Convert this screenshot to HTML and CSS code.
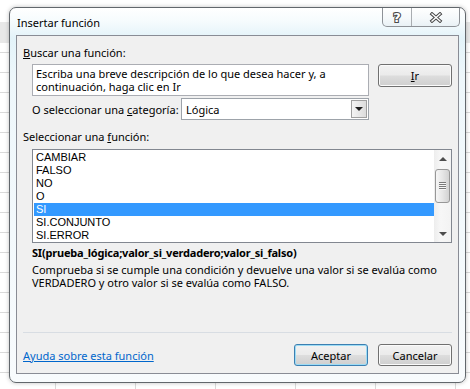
FILE: index.html
```html
<!DOCTYPE html>
<html lang="es">
<head>
  <meta charset="UTF-8">
  <title>Insertar función</title>
  <link rel="stylesheet" href="styles.css">
</head>
<body>
  <div class="dialog">
    <div class="titlebar">
      <span class="title">Insertar función</span>
      <div class="caption-btns">
        <span class="cap-btn help">
          <svg width="12" height="14" viewBox="0 0 12 14"><text x="6" y="12" text-anchor="middle" class="help-glyph">?</text></svg>
        </span>
        <span class="cap-btn close">
          <svg width="14" height="11" viewBox="0 0 14 11">
            <path d="M3 2 L11 9 M11 2 L3 9" stroke="#4a4a4a" stroke-width="3.4" stroke-linecap="square"/>
            <path d="M3 2 L11 9 M11 2 L3 9" stroke="#fff" stroke-width="1.4" stroke-linecap="square"/>
          </svg>
        </span>
      </div>
    </div>

    <div class="client">
      <div class="label first"><u>B</u>uscar una función:</div>
      <div class="search-row">
        <div class="search-box">Escriba una breve descripción de lo que desea hacer y, a continuación, haga clic en Ir</div>
        <button class="btn go"><u>I</u>r</button>
      </div>
      <div class="cat-row">
        <span class="cat-label">O seleccionar una <u>c</u>ategoría:</span>
        <div class="select">
          <span class="select-value">Lógica</span>
          <span class="drop"><span class="tri down"></span></span>
        </div>
      </div>
      <div class="label second">Seleccionar una <u>f</u>unción:</div>
      <div class="listbox">
        <ul class="items">
          <li>CAMBIAR</li>
          <li>FALSO</li>
          <li>NO</li>
          <li>O</li>
          <li class="selected">SI</li>
          <li>SI.CONJUNTO</li>
          <li>SI.ERROR</li>
        </ul>
        <div class="scrollbar">
          <div class="sb-arrow"><span class="tri up"></span></div>
          <div class="sb-track"><div class="thumb"><span class="grip"></span></div></div>
          <div class="sb-arrow"><span class="tri down small"></span></div>
        </div>
      </div>
      <div class="signature">SI(prueba_lógica;valor_si_verdadero;valor_si_falso)</div>
      <p class="desc">Comprueba si se cumple una condición y devuelve una valor si se evalúa como VERDADERO y otro valor si se evalúa como FALSO.</p>
      <div class="spacer"></div>
      <div class="sep"></div>
      <div class="footer">
        <a class="help-link" href="#">Ayuda sobre esta función</a>
        <div class="buttons">
          <button class="btn default">Aceptar</button>
          <button class="btn">Cancelar</button>
        </div>
      </div>
    </div>
  </div>
</body>
</html>
```

FILE: styles.css
```css
body {
  margin: 0;
  width: 470px;
  height: 389px;
  position: relative;
  overflow: hidden;
  font: 11px/15px "Noto Sans", sans-serif;
  color: #000;
  background:
    linear-gradient(#fff, #fff) 0 0 / 100% 22px no-repeat,
    linear-gradient(#e8e8e8, #e8e8e8) 0 22px / 100% 21px no-repeat,
    repeating-linear-gradient(90deg, transparent 0 55px, #dadada 55px 56px, transparent 56px 80px),
    repeating-linear-gradient(180deg, transparent 0 12px, #dadada 12px 13px, transparent 13px 20px),
    #fff;
}

/* window */
.dialog {
  position: absolute;
  left: 9px;
  top: 7px;
  width: 457px;
  height: 376px;
  box-sizing: border-box;
  border: 1px solid #62676c;
  border-radius: 7px;
  padding: 0 6px 8px 6px;
  display: flex;
  flex-direction: column;
  background: linear-gradient(180deg, #ffffff 0px, #f5fbfd 14px, #e3f3f9 30px, #eef7fb 70px, #f8fbfd 100%);
  box-shadow: 0 0 4px rgba(0, 0, 0, 0.25);
}
.titlebar {
  height: 27px;
  margin: 0 -6px;
  padding-left: 7px;
  display: flex;
  align-items: flex-start;
}
.title {
  margin-top: 7px;
  font-size: 11px;
}
.caption-btns {
  margin-left: auto;
  margin-right: 5px;
  height: 18px;
  display: flex;
  border: 1px solid #8e9297;
  border-top: none;
  border-radius: 0 0 5px 5px;
  background: linear-gradient(#ffffff, #f4f8fa 60%, #e9f1f5);
  overflow: hidden;
}
.cap-btn {
  display: flex;
  align-items: center;
  justify-content: center;
}
.cap-btn.help {
  width: 28px;
  border-right: 1px solid #a9adb1;
}
.cap-btn.close {
  width: 47px;
}
.help-glyph {
  font: bold 13px "DejaVu Sans", sans-serif;
  fill: #fff;
  stroke: #4a4a4a;
  stroke-width: 2.2px;
  paint-order: stroke;
}

/* client area */
.client {
  flex: 1;
  border: 1px solid #898c95;
  background: #f0f0f0;
  padding: 0 6px 7px;
  display: flex;
  flex-direction: column;
}
.label.first {
  margin-top: 9px;
}
.label.second {
  margin-top: 9px;
}
.search-row {
  margin-top: 4px;
  margin-left: 9px;
  display: flex;
  align-items: flex-start;
}
.search-box {
  width: 337px;
  height: 32px;
  box-sizing: border-box;
  border: 1px solid #abadb3;
  background: #fff;
  padding: 2px 3px;
  line-height: 13px;
}
.cat-row {
  margin-top: 2px;
  margin-left: 9px;
  display: flex;
  align-items: center;
  height: 22px;
}
.cat-label {
  width: 149px;
}
.select {
  width: 188px;
  height: 22px;
  box-sizing: border-box;
  border: 1px solid #9da3aa;
  background: #fff;
  display: flex;
  align-items: center;
  padding-left: 4px;
}
.select-value {
  flex: 1;
}
.drop {
  width: 16px;
  height: 18px;
  margin-right: 1px;
  box-sizing: border-box;
  border: 1px solid #a0a0a0;
  background: linear-gradient(90deg, #f4f4f4, #dcdcdc);
  display: flex;
  align-items: center;
  justify-content: center;
}
.tri {
  width: 0;
  height: 0;
  border-left: 4px solid transparent;
  border-right: 4px solid transparent;
}
.tri.down {
  border-top: 4px solid #1e1e1e;
}
.tri.up {
  border-bottom: 4px solid #4d4d4d;
}
.tri.down.small {
  border-top-color: #4d4d4d;
}

/* list */
.listbox {
  margin-top: 5px;
  margin-left: 9px;
  height: 94px;
  box-sizing: border-box;
  border: 1px solid #828790;
  background: #fff;
  display: flex;
}
.items {
  flex: 1;
  list-style: none;
  margin: 0;
  padding: 1px 0 0 1px;
  font: 11px/13px "Liberation Sans", Arial, sans-serif;
  overflow: hidden;
}
.items li {
  padding-left: 2px;
  height: 13px;
}
.items li.selected {
  background: #3399ff;
  color: #fff;
}
.scrollbar {
  width: 17px;
  display: flex;
  flex-direction: column;
  background: linear-gradient(90deg, #ededed, #f7f7f7 40%, #f3f3f3);
}
.sb-arrow {
  height: 17px;
  display: flex;
  align-items: center;
  justify-content: center;
}
.sb-track {
  flex: 1;
}
.thumb {
  margin: 2px 1px 0 1px;
  height: 34px;
  box-sizing: border-box;
  border: 1px solid #979797;
  border-radius: 3px;
  background: linear-gradient(90deg, #f6f6f6, #e6e6e6 50%, #d2d2d2);
  display: flex;
  align-items: center;
  justify-content: center;
}
.grip {
  width: 7px;
  height: 8px;
  background: repeating-linear-gradient(180deg, #7a7a7a 0 1px, #f6f6f6 1px 2px);
}

.signature {
  margin-top: 2px;
  font-weight: bold;
  margin-left: 9px;
  letter-spacing: -0.2px;
}
.desc {
  margin: 3px 0 0 9px;
  line-height: 13px;
}
.spacer {
  flex: 1;
}
.sep {
  height: 1px;
  background: #d8dde3;
  margin-bottom: 11px;
}
.footer {
  display: flex;
  align-items: center;
  height: 22px;
}
.help-link {
  color: #0066cc;
  text-decoration: underline;
}
.buttons {
  margin-left: auto;
  display: flex;
  gap: 10px;
}

/* buttons */
.btn {
  width: 74px;
  height: 23px;
  padding: 0;
  font: 11px "Noto Sans", sans-serif;
  color: #000;
  border: 1px solid #707070;
  border-radius: 3px;
  background: linear-gradient(#f2f2f2 0%, #ebebeb 48%, #dddddd 52%, #cfcfcf 100%);
  box-shadow: inset 0 0 0 1px #fbfbfb;
}
.btn.go {
  margin-left: auto;
}
.buttons .btn {
  height: 22px;
}
.btn.default {
  border-color: #3c7fb1;
  box-shadow: inset 0 0 0 1px #9ddcf5;
}
```
